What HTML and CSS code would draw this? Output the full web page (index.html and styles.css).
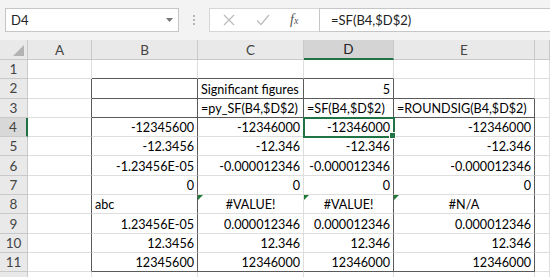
FILE: index.html
```html
<!DOCTYPE html>
<html lang="en">
<head>
<meta charset="UTF-8" />
<meta name="viewport" content="width=device-width, initial-scale=1" />
<title>Significant figures</title>
<link rel="stylesheet" href="styles.css">
</head>
<body>
  <div class="formula-bar">
    <div class="name-box">
      <span>D4</span>
      <svg class="drop" width="7" height="4" viewBox="0 0 7 4"><path d="M0 0h7L3.5 4z" fill="#777"/></svg>
    </div>
    <div class="grip"><i></i><i></i><i></i></div>
    <div class="fx-area">
      <svg class="fx-btn" width="12" height="12" viewBox="0 0 12 12"><path d="M1 1l10 10M11 1L1 11" stroke="#bdbdbd" stroke-width="1.3" fill="none"/></svg>
      <svg class="fx-btn" width="14" height="12" viewBox="0 0 14 12"><path d="M1 6.5l4 4L13 1" stroke="#bdbdbd" stroke-width="1.3" fill="none"/></svg>
      <span class="fx">f<sub>x</sub></span>
    </div>
    <div class="formula-input">=SF(B4,$D$2)</div>
  </div>

  <div class="sheet">
    <!-- column headers -->
    <div class="hd corner"></div>
    <div class="hd">A</div>
    <div class="hd">B</div>
    <div class="hd">C</div>
    <div class="hd active-col">D</div>
    <div class="hd">E</div>
    <div class="hd"></div>

    <!-- row 1 -->
    <div class="rh">1</div>
    <div class="c"></div>
    <div class="c b"></div>
    <div class="c b"></div>
    <div class="c b"></div>
    <div class="c"></div>
    <div class="c"></div>

    <!-- row 2 -->
    <div class="rh">2</div>
    <div class="c r"></div>
    <div class="c r b"></div>
    <div class="c r b txt">Significant figures</div>
    <div class="c r b">5</div>
    <div class="c b"></div>
    <div class="c"></div>

    <!-- row 3 -->
    <div class="rh">3</div>
    <div class="c r"></div>
    <div class="c r b"></div>
    <div class="c r b txt">=py_SF(B4,$D$2)</div>
    <div class="c r b txt">=SF(B4,$D$2)</div>
    <div class="c r b txt">=ROUNDSIG(B4,$D$2)</div>
    <div class="c"></div>

    <!-- row 4 -->
    <div class="rh active-row">4</div>
    <div class="c r"></div>
    <div class="c r">-12345600</div>
    <div class="c">-12346000</div>
    <div class="c r sel">-12346000</div>
    <div class="c r">-12346000</div>
    <div class="c"></div>

    <!-- row 5 -->
    <div class="rh">5</div>
    <div class="c r"></div>
    <div class="c r">-12.3456</div>
    <div class="c">-12.346</div>
    <div class="c r">-12.346</div>
    <div class="c r">-12.346</div>
    <div class="c"></div>

    <!-- row 6 -->
    <div class="rh">6</div>
    <div class="c r"></div>
    <div class="c r">-1.23456E-05</div>
    <div class="c">-0.000012346</div>
    <div class="c r">-0.000012346</div>
    <div class="c r">-0.000012346</div>
    <div class="c"></div>

    <!-- row 7 -->
    <div class="rh">7</div>
    <div class="c r"></div>
    <div class="c r">0</div>
    <div class="c">0</div>
    <div class="c r">0</div>
    <div class="c r">0</div>
    <div class="c"></div>

    <!-- row 8 -->
    <div class="rh">8</div>
    <div class="c r"></div>
    <div class="c r txt">abc</div>
    <div class="c err">#VALUE!</div>
    <div class="c r err">#VALUE!</div>
    <div class="c r err">#N/A</div>
    <div class="c"></div>

    <!-- row 9 -->
    <div class="rh">9</div>
    <div class="c r"></div>
    <div class="c r">1.23456E-05</div>
    <div class="c">0.000012346</div>
    <div class="c r">0.000012346</div>
    <div class="c r">0.000012346</div>
    <div class="c"></div>

    <!-- row 10 -->
    <div class="rh">10</div>
    <div class="c r"></div>
    <div class="c r">12.3456</div>
    <div class="c">12.346</div>
    <div class="c r">12.346</div>
    <div class="c r">12.346</div>
    <div class="c"></div>

    <!-- row 11 -->
    <div class="rh">11</div>
    <div class="c r"></div>
    <div class="c r b">12345600</div>
    <div class="c b">12346000</div>
    <div class="c r b">12346000</div>
    <div class="c r b">12346000</div>
    <div class="c"></div>

    <!-- row 12, only its top edge shows -->
    <div class="rh"></div>
    <div class="c"></div>
    <div class="c"></div>
    <div class="c"></div>
    <div class="c"></div>
    <div class="c"></div>
    <div class="c"></div>
  </div>
</body>
</html>
```

FILE: styles.css
```css
:root {
  --bar-bg: #f3f3f3;
  --header-bg: #e9e9e9;
  --header-line: #c9c9c9;
  --grid-line: #dedede;
  --dark-line: #5a5a5a;
  --excel-green: #217346;
  --text: #000;
}

* {
  box-sizing: border-box;
}

body {
  margin: 0;
  width: 550px;
  height: 277px;
  overflow: hidden;
  background: var(--bar-bg);
  font-family: Lato, "Liberation Sans", sans-serif;
  font-size: 13px;
  color: var(--text);
}

/* formula bar */
.formula-bar {
  display: flex;
  align-items: flex-start;
  height: 40px;
  padding: 8px 0 0 5px;
}

.name-box {
  width: 174px;
  height: 24px;
  display: flex;
  align-items: center;
  justify-content: space-between;
  padding: 0 5px 0 5px;
  background: #fff;
  border: 1px solid #c6c6c6;
  color: #222;
}

.grip {
  width: 30px;
  height: 24px;
  display: flex;
  flex-direction: column;
  align-items: center;
  justify-content: center;
  gap: 2px;
}

.grip i {
  width: 2px;
  height: 2px;
  background: #b5b5b5;
}

.fx-area {
  width: 110px;
  height: 24px;
  display: flex;
  align-items: center;
  padding-left: 13px;
  gap: 21px;
  background: #fff;
  border: 1px solid #d6d6d6;
  border-right: none;
}

.fx {
  font-family: "Liberation Serif", serif;
  font-style: italic;
  font-size: 14px;
  color: #555;
  margin-left: -1px;
}

.fx sub {
  font-size: 10px;
  vertical-align: 0;
}

.formula-input {
  flex: 1;
  height: 24px;
  display: flex;
  align-items: center;
  padding-left: 11px;
  background: #fff;
  border: 1px solid #c6c6c6;
  border-right: none;
  color: #222;
}

/* sheet grid */
.sheet {
  display: grid;
  grid-template-columns: 28px 64px 106px 106px 90px 141px 1fr;
  grid-template-rows: 20px repeat(11, 19.3px) 6px;
  background: #fff;
}

.hd {
  display: flex;
  align-items: center;
  justify-content: center;
  background: var(--header-bg);
  border-right: 1px solid var(--header-line);
  border-bottom: 1px solid var(--header-line);
  color: #444;
  font-size: 13.5px;
}

.corner {
  position: relative;
}

.corner::after {
  content: "";
  position: absolute;
  right: 3px;
  bottom: 3px;
  border-style: solid;
  border-width: 0 0 11px 11px;
  border-color: transparent transparent #b3b3b3 transparent;
}

.active-col {
  background: #d4d4d4;
  border-bottom: 2px solid var(--excel-green);
  color: #222;
}

.rh {
  display: flex;
  align-items: center;
  justify-content: center;
  background: var(--header-bg);
  border-right: 1px solid var(--header-line);
  border-bottom: 1px solid var(--header-line);
  color: #444;
  font-size: 13.5px;
}

.active-row {
  background: #d8d8d8;
  border-right: 2px solid var(--excel-green);
}

.c {
  position: relative;
  display: flex;
  align-items: flex-end;
  justify-content: flex-end;
  padding: 0 3px 1px 3px;
  border-right: 1px solid var(--grid-line);
  border-bottom: 1px solid var(--grid-line);
  white-space: nowrap;
  font-size: 12.6px;
}

.c.r {
  border-right-color: var(--dark-line);
}

.c.b {
  border-bottom-color: var(--dark-line);
}

.c.txt {
  justify-content: flex-start;
}

.c.err {
  justify-content: center;
}

.c.err::before {
  content: "";
  position: absolute;
  left: 0;
  top: 0;
  border-style: solid;
  border-width: 5px 5px 0 0;
  border-color: #1e7a34 transparent transparent transparent;
}

.c.sel {
  z-index: 2;
  outline: 2px solid var(--excel-green);
  outline-offset: -1px;
}

.c.sel::after {
  content: "";
  position: absolute;
  right: -3px;
  bottom: -3px;
  width: 5px;
  height: 5px;
  background: var(--excel-green);
  border: 1px solid #fff;
}
```
